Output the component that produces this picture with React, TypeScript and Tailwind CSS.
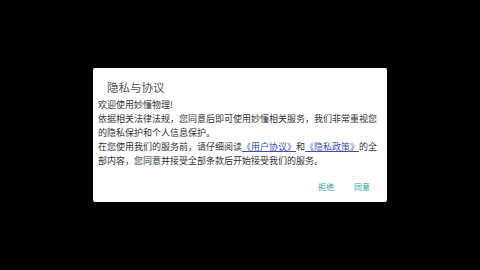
import React from "react";

export default function App() {
  return (
    <div
      className="w-[480px] h-[270px] bg-black flex items-center justify-center"
      style={{ fontFamily: '"Noto Sans CJK SC", "Noto Sans", sans-serif' }}
    >
      <div className="w-[294px] h-[134px] bg-white rounded-[2px] flex flex-col">
        <div className="pl-[14px] pt-[12px] text-[11.5px] leading-[14px] text-[#555555]">
          隐私与协议
        </div>
        <div className="mt-[4px] pl-[5px] text-[9px] leading-[14px] text-[#333333] whitespace-nowrap">
          <div>欢迎使用妙懂物理!</div>
          <div>依据相关法律法规，您同意后即可使用妙懂相关服务，我们非常重视您</div>
          <div>的隐私保护和个人信息保护。</div>
          <div>
            在您使用我们的服务前，请仔细阅读
            <span className="text-[#3f51b5] underline">《用户协议》</span>和
            <span className="text-[#3f51b5] underline">《隐私政策》</span>的全
          </div>
          <div>部内容，您同意并接受全部条款后开始接受我们的服务。</div>
        </div>
        <div className="mt-auto mb-[9px] pr-[17px] flex justify-end gap-[20px] text-[8px] leading-[12px] text-[#26a69a]">
          <span>拒绝</span>
          <span>同意</span>
        </div>
      </div>
    </div>
  );
}
